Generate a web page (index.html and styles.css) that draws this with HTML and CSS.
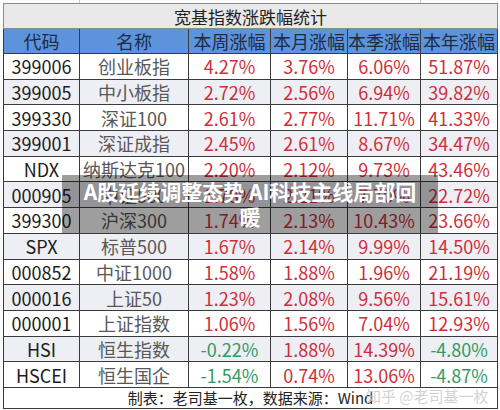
FILE: index.html
```html
<!DOCTYPE html>
<html lang="zh-CN">
<head>
<meta charset="utf-8">
<title>宽基指数涨跌幅统计</title>
<link rel="stylesheet" href="styles.css">
</head>
<body>
<div class="sheet">
  <div class="topstrip"><span class="ts ts1"></span><span class="ts ts2"></span><span class="ts ts3"></span></div>
  <table class="tbl">
    <colgroup>
      <col class="w1"><col class="w2"><col class="w3"><col class="w4"><col class="w5"><col class="w6">
    </colgroup>
    <tr class="title"><td colspan="6">宽基指数涨跌幅统计</td></tr>
    <tr class="head"><td>代码</td><td>名称</td><td>本周涨幅</td><td>本月涨幅</td><td>本季涨幅</td><td>本年涨幅</td></tr>
    <tr class="row"><td class="code">399006</td><td class="name">创业板指</td><td class="up">4.27%</td><td class="up">3.76%</td><td class="up">6.06%</td><td class="up">51.87%</td></tr>
    <tr class="row alt"><td class="code">399005</td><td class="name">中小板指</td><td class="up">2.72%</td><td class="up">2.56%</td><td class="up">6.94%</td><td class="up">39.82%</td></tr>
    <tr class="row"><td class="code">399330</td><td class="name">深证100</td><td class="up">2.61%</td><td class="up">2.77%</td><td class="up">11.71%</td><td class="up">41.33%</td></tr>
    <tr class="row alt"><td class="code">399001</td><td class="name">深证成指</td><td class="up">2.45%</td><td class="up">2.61%</td><td class="up">8.67%</td><td class="up">34.47%</td></tr>
    <tr class="row"><td class="code">NDX</td><td class="name">纳斯达克100</td><td class="up">2.20%</td><td class="up">2.12%</td><td class="up">9.73%</td><td class="up">43.46%</td></tr>
    <tr class="row alt"><td class="code">000905</td><td class="name">中证500</td><td class="up">1.78%</td><td class="up">2.21%</td><td class="up">7.70%</td><td class="up">22.72%</td></tr>
    <tr class="row"><td class="code">399300</td><td class="name">沪深300</td><td class="up">1.74%</td><td class="up">2.13%</td><td class="up">10.43%</td><td class="up">23.66%</td></tr>
    <tr class="row alt"><td class="code">SPX</td><td class="name">标普500</td><td class="up">1.67%</td><td class="up">2.14%</td><td class="up">9.99%</td><td class="up">14.50%</td></tr>
    <tr class="row"><td class="code">000852</td><td class="name">中证1000</td><td class="up">1.58%</td><td class="up">1.88%</td><td class="up">1.96%</td><td class="up">21.19%</td></tr>
    <tr class="row alt"><td class="code">000016</td><td class="name">上证50</td><td class="up">1.23%</td><td class="up">2.08%</td><td class="up">9.56%</td><td class="up">15.61%</td></tr>
    <tr class="row"><td class="code">000001</td><td class="name">上证指数</td><td class="up">1.06%</td><td class="up">1.56%</td><td class="up">7.04%</td><td class="up">12.93%</td></tr>
    <tr class="row alt"><td class="code">HSI</td><td class="name">恒生指数</td><td class="down">-0.22%</td><td class="up">1.88%</td><td class="up">14.39%</td><td class="down">-4.80%</td></tr>
    <tr class="row"><td class="code">HSCEI</td><td class="name">恒生国企</td><td class="down">-1.54%</td><td class="up">0.74%</td><td class="up">13.06%</td><td class="down">-4.87%</td></tr>
    <tr class="foot"><td colspan="6">制表：老司基一枚，数据来源：Wind</td></tr>
  </table>
  <div class="banner">A股延续调整态势 AI科技主线局部回暖</div>
  <div class="watermark">知乎 @老司基一枚</div>
</div>
</body>
</html>
```

FILE: styles.css
```css
html, body {
  margin: 0;
  padding: 0;
  background: #ffffff;
}

.sheet {
  position: relative;
  width: 500px;
  height: 410px;
  overflow: hidden;
  font-family: "Noto Sans CJK SC", "Noto Sans", sans-serif;
  background: #fbfbfb;
}

.topstrip {
  display: flex;
  height: 3px;
}

.ts {
  border-right: 1px solid #c9c9c9;
}

.ts1 { width: 79px; }
.ts2 { width: 340px; }
.ts3 { flex: 1; border-right: none; }

.tbl {
  margin-left: 3px;
  border-collapse: collapse;
  table-layout: fixed;
  width: 494px;
  font-size: 18px;
  line-height: 1;
}

.w1 { width: 76px; }
.w2 { width: 109px; }
.w3 { width: 82px; }
.w4 { width: 77px; }
.w5 { width: 73px; }
.w6 { width: 77px; }

.tbl td {
  border: 1px solid #3b3b3b;
  padding: 0;
  text-align: center;
  white-space: nowrap;
  overflow: hidden;
}

.title td {
  height: 24px;
  background: #e9e9e9;
  color: #222222;
  font-size: 17px;
  border-color: #8a8a8a;
}

.head td {
  height: 24px;
  background: #5c93da;
  color: #1e2b45;
  font-size: 18px;
}

.row td {
  height: 24.7px;
  background: #ffffff;
}

.row.alt td {
  background: #eeeef5;
}

.code {
  color: #1c1c1c;
  font-size: 18px;
}

.name {
  color: #585858;
}

.up {
  color: #cf2e39;
}

.down {
  color: #2f9c63;
}

.foot td {
  height: 20px;
  background: #ffffff;
  color: #222222;
  font-size: 15px;
}

.banner {
  position: absolute;
  left: 62px;
  top: 175px;
  width: 376px;
  height: 58px;
  box-sizing: border-box;
  padding: 4px 20px;
  background: rgba(0, 0, 0, 0.38);
  color: #ffffff;
  font-size: 21px;
  font-weight: 700;
  line-height: 25px;
  text-align: center;
}

.watermark {
  position: absolute;
  left: 366px;
  top: 386px;
  font-size: 15px;
  line-height: 20px;
  color: rgba(170, 170, 170, 0.55);
  text-shadow: 0 0 1px rgba(255, 255, 255, 0.8);
}
```
